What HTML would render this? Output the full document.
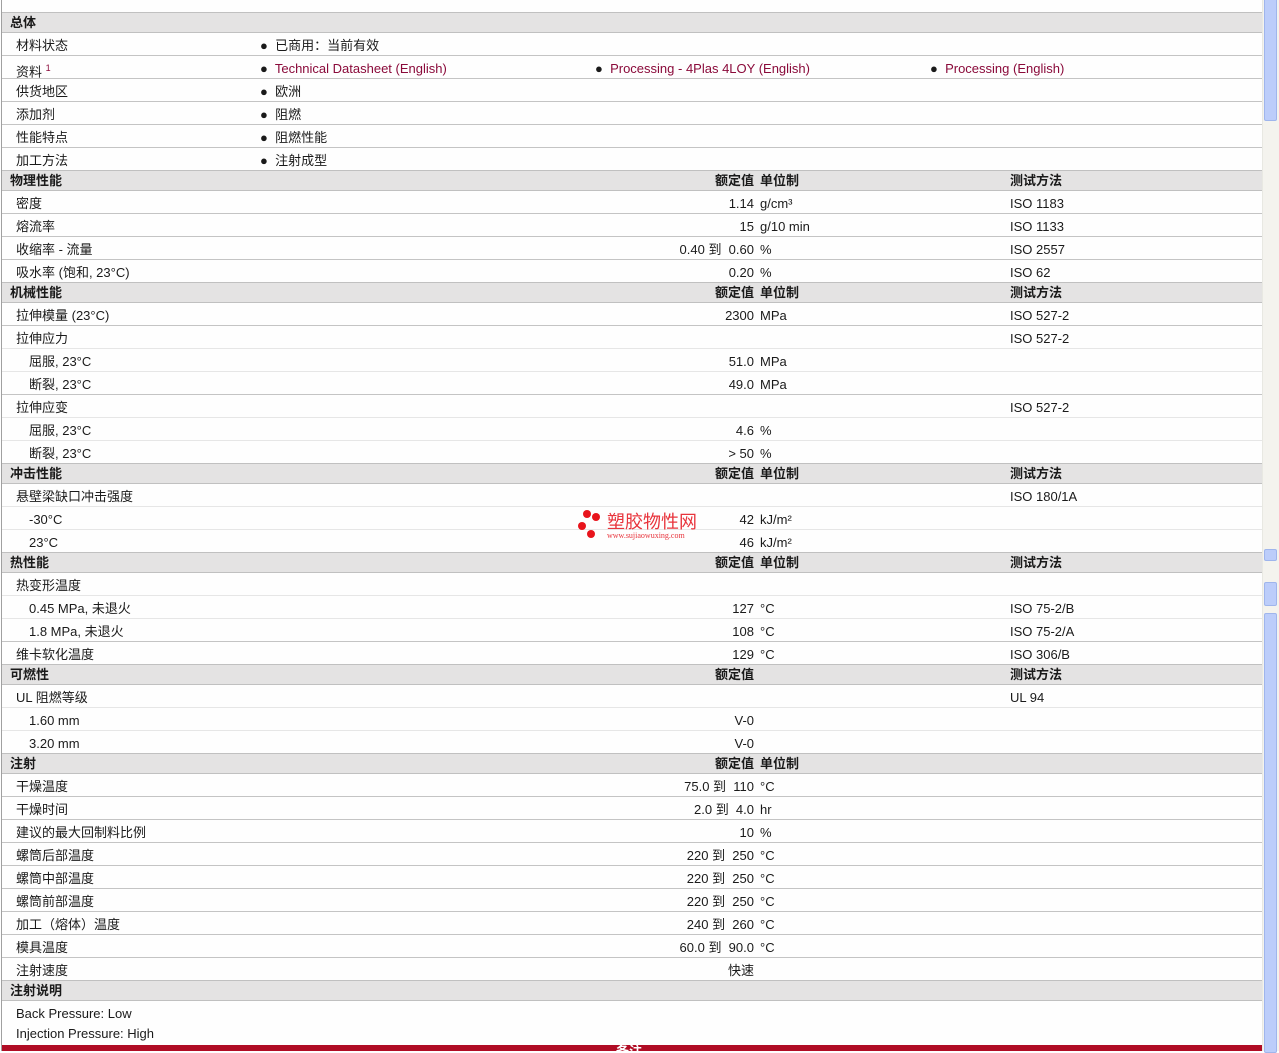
<!DOCTYPE html>
<html><head><meta charset="utf-8"><style>
*{margin:0;padding:0;box-sizing:border-box}
body{width:1279px;height:1051px;overflow:hidden;background:#fefefe;font-family:"Liberation Sans","Noto Sans CJK SC",sans-serif;font-size:13px;color:#1a1a1a;position:relative}
#lb{position:absolute;left:1px;top:0;width:1px;height:1051px;background:#a0a0a0}
#wrap{position:absolute;left:2px;top:13px;width:1260px}
.r{position:relative;height:23px;border-bottom:1px solid #c4c4c4}
.r.s{border-bottom-color:#e6e6e6}
.h{position:relative;height:21px;background:#e4e3e3;border-top:1px solid #c0c0c0;border-bottom:1px solid #c0c0c0;font-weight:bold;margin-top:-1px}
.r span,.h span{position:absolute;top:5px;white-space:nowrap;line-height:15px}
.h span{top:2px}
.l{left:14px}.l2{left:27px}
.v{right:508px;text-align:right}
.u{left:758px}
.t{left:1008px}
.b{left:258px}.b2{left:593px}.b3{left:928px}
a{color:#8a0a3a;text-decoration:none}
#sb{position:absolute;left:1262px;top:0;width:17px;height:1051px;background:#f4f3ee;border-left:1px solid #e8e8e2}
.th{position:absolute;left:1264px;width:13px;background:#bccdfa;border:1px solid #9fb5ec;border-radius:2px}
#red{position:absolute;left:2px;top:1045px;width:1260px;height:6px;background:#b00c24;overflow:hidden}
#red span{position:absolute;left:614px;top:-4px;color:#fff;font-weight:bold;font-size:13px}
</style></head><body>
<div id="lb"></div>
<div id="wrap">
<div class="h"><span class="l" style="left:8px">总体</span></div>
<div class="r"><span class="l">材料状态</span><span class="b">●&nbsp; 已商用：当前有效</span></div>
<div class="r"><span class="l">资料 <sup style="font-size:9px;color:#8a0a3a">1</sup></span><span class="b">●&nbsp; <a>Technical Datasheet (English)</a></span><span class="b2">●&nbsp; <a>Processing - 4Plas 4LOY (English)</a></span><span class="b3">●&nbsp; <a>Processing (English)</a></span></div>
<div class="r"><span class="l">供货地区</span><span class="b">●&nbsp; 欧洲</span></div>
<div class="r"><span class="l">添加剂</span><span class="b">●&nbsp; 阻燃</span></div>
<div class="r"><span class="l">性能特点</span><span class="b">●&nbsp; 阻燃性能</span></div>
<div class="r"><span class="l">加工方法</span><span class="b">●&nbsp; 注射成型</span></div>
<div class="h"><span class="l" style="left:8px">物理性能</span><span class="v">额定值</span><span class="u">单位制</span><span class="t">测试方法</span></div>
<div class="r"><span class="l">密度</span><span class="v">1.14</span><span class="u">g/cm³</span><span class="t">ISO 1183</span></div>
<div class="r"><span class="l">熔流率</span><span class="v">15</span><span class="u">g/10 min</span><span class="t">ISO 1133</span></div>
<div class="r"><span class="l">收缩率 - 流量</span><span class="v">0.40 到&nbsp; 0.60</span><span class="u">%</span><span class="t">ISO 2557</span></div>
<div class="r"><span class="l">吸水率 (饱和, 23°C)</span><span class="v">0.20</span><span class="u">%</span><span class="t">ISO 62</span></div>
<div class="h"><span class="l" style="left:8px">机械性能</span><span class="v">额定值</span><span class="u">单位制</span><span class="t">测试方法</span></div>
<div class="r"><span class="l">拉伸模量 (23°C)</span><span class="v">2300</span><span class="u">MPa</span><span class="t">ISO 527-2</span></div>
<div class="r s"><span class="l">拉伸应力</span><span class="t">ISO 527-2</span></div>
<div class="r s"><span class="l2">屈服, 23°C</span><span class="v">51.0</span><span class="u">MPa</span></div>
<div class="r"><span class="l2">断裂, 23°C</span><span class="v">49.0</span><span class="u">MPa</span></div>
<div class="r s"><span class="l">拉伸应变</span><span class="t">ISO 527-2</span></div>
<div class="r s"><span class="l2">屈服, 23°C</span><span class="v">4.6</span><span class="u">%</span></div>
<div class="r"><span class="l2">断裂, 23°C</span><span class="v">&gt; 50</span><span class="u">%</span></div>
<div class="h"><span class="l" style="left:8px">冲击性能</span><span class="v">额定值</span><span class="u">单位制</span><span class="t">测试方法</span></div>
<div class="r s"><span class="l">悬壁梁缺口冲击强度</span><span class="t">ISO 180/1A</span></div>
<div class="r s"><span class="l2">-30°C</span><span class="v">42</span><span class="u">kJ/m²</span></div>
<div class="r"><span class="l2">23°C</span><span class="v">46</span><span class="u">kJ/m²</span></div>
<div class="h"><span class="l" style="left:8px">热性能</span><span class="v">额定值</span><span class="u">单位制</span><span class="t">测试方法</span></div>
<div class="r s"><span class="l">热变形温度</span></div>
<div class="r s"><span class="l2">0.45 MPa, 未退火</span><span class="v">127</span><span class="u">°C</span><span class="t">ISO 75-2/B</span></div>
<div class="r"><span class="l2">1.8 MPa, 未退火</span><span class="v">108</span><span class="u">°C</span><span class="t">ISO 75-2/A</span></div>
<div class="r"><span class="l">维卡软化温度</span><span class="v">129</span><span class="u">°C</span><span class="t">ISO 306/B</span></div>
<div class="h"><span class="l" style="left:8px">可燃性</span><span class="v">额定值</span><span class="t">测试方法</span></div>
<div class="r s"><span class="l">UL 阻燃等级</span><span class="t">UL 94</span></div>
<div class="r s"><span class="l2">1.60 mm</span><span class="v">V-0</span></div>
<div class="r"><span class="l2">3.20 mm</span><span class="v">V-0</span></div>
<div class="h"><span class="l" style="left:8px">注射</span><span class="v">额定值</span><span class="u">单位制</span></div>
<div class="r"><span class="l">干燥温度</span><span class="v">75.0 到&nbsp; 110</span><span class="u">°C</span></div>
<div class="r"><span class="l">干燥时间</span><span class="v">2.0 到&nbsp; 4.0</span><span class="u">hr</span></div>
<div class="r"><span class="l">建议的最大回制料比例</span><span class="v">10</span><span class="u">%</span></div>
<div class="r"><span class="l">螺筒后部温度</span><span class="v">220 到&nbsp; 250</span><span class="u">°C</span></div>
<div class="r"><span class="l">螺筒中部温度</span><span class="v">220 到&nbsp; 250</span><span class="u">°C</span></div>
<div class="r"><span class="l">螺筒前部温度</span><span class="v">220 到&nbsp; 250</span><span class="u">°C</span></div>
<div class="r"><span class="l">加工（熔体）温度</span><span class="v">240 到&nbsp; 260</span><span class="u">°C</span></div>
<div class="r"><span class="l">模具温度</span><span class="v">60.0 到&nbsp; 90.0</span><span class="u">°C</span></div>
<div class="r"><span class="l">注射速度</span><span class="v">快速</span></div>
<div class="h"><span class="l" style="left:8px">注射说明</span></div>
<div style="position:relative;height:40px"><span style="position:absolute;left:14px;top:5px">Back Pressure: Low</span><span style="position:absolute;left:14px;top:25px">Injection Pressure: High</span></div>
</div>
<div style="position:absolute;left:577px;top:508px;width:130px;height:36px">
<div style="position:absolute;left:6px;top:2px;width:8px;height:8px;border-radius:50%;background:#e8141c"></div>
<div style="position:absolute;left:15px;top:5px;width:8px;height:8px;border-radius:50%;background:#e8141c"></div>
<div style="position:absolute;left:1px;top:14px;width:8px;height:8px;border-radius:50%;background:#e8141c"></div>
<div style="position:absolute;left:10px;top:22px;width:8px;height:8px;border-radius:50%;background:#e8141c"></div>
<span style="position:absolute;left:30px;top:3px;font-size:18px;color:#e8343c;font-family:'Noto Sans CJK SC',sans-serif;line-height:20px">塑胶物性网</span>
<span style="position:absolute;left:30px;top:23px;font-size:8px;color:#e8343c;font-family:'Liberation Serif',serif">www.sujiaowuxing.com</span>
</div>
<div id="red"><span>备注</span></div>
<div id="sb"></div>
<div class="th" style="top:-2px;height:123px"></div>
<div class="th" style="top:549px;height:12px"></div>
<div class="th" style="top:582px;height:24px"></div>
<div class="th" style="top:613px;height:440px"></div>
</body></html>
